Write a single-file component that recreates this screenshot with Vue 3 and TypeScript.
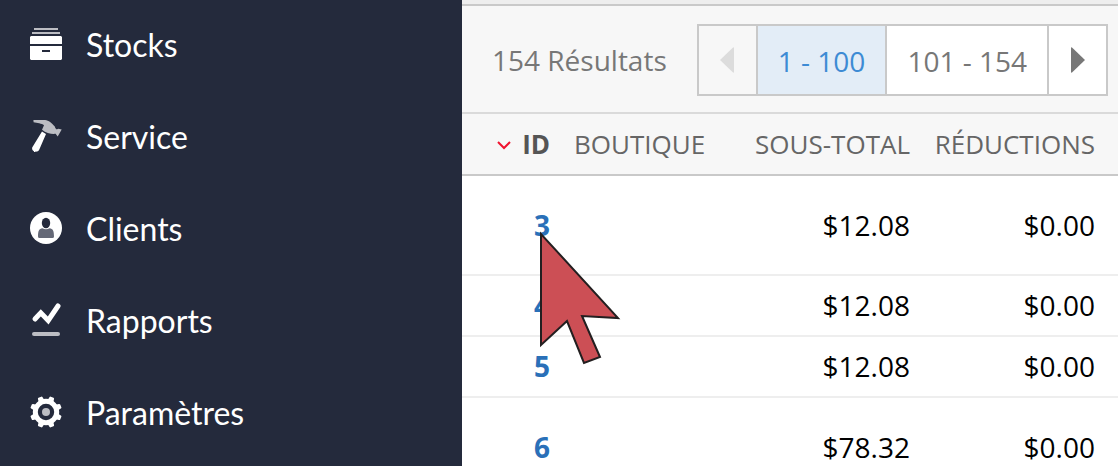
<script setup lang="ts">
interface NavItem { label: string; icon: string }
interface Sale { id: number; subtotal: string; discount: string; tall: boolean }

const nav: NavItem[] = [
  { label: 'Stocks', icon: 'drawer' },
  { label: 'Service', icon: 'hammer' },
  { label: 'Clients', icon: 'person' },
  { label: 'Rapports', icon: 'chart' },
  { label: 'Paramètres', icon: 'gear' },
]

const sales: Sale[] = [
  { id: 3, subtotal: '$12.08', discount: '$0.00', tall: true },
  { id: 4, subtotal: '$12.08', discount: '$0.00', tall: false },
  { id: 5, subtotal: '$12.08', discount: '$0.00', tall: false },
  { id: 6, subtotal: '$78.32', discount: '$0.00', tall: true },
]
</script>

<template>
  <div class="layout">
    <nav class="sidebar">
      <a v-for="item in nav" :key="item.label" class="nav-item" href="#">
        <svg class="nav-icon" viewBox="0 0 32 32" aria-hidden="true">
          <g v-if="item.icon === 'drawer'">
            <path class="dim" d="M4 0h24v2H4zM2 4h28v2H2z" />
            <path d="M1 8h30l1 1v7H0V9zM0 18h32v13l-1 1H1l-1-1zM12 22v2h8v-2z" fill-rule="evenodd" />
          </g>
          <g v-else-if="item.icon === 'hammer'">
            <path class="dim" d="M3.400 0H15C19 .3 21.500 3 24.800 6.400C25.500 9 26.500 9.800 28.500 8.800L31.700 9.500L27.700 16.400L25.600 13.800C22 14.200 16 13.400 12 9.800L14 5.200C11.800 3.300 7 3.300 3.600 2.300Z" />
            <path d="M12 11.500L16 14L9.300 29.500C8 33 1.200 32.200 2.200 27.500Z" />
          </g>
          <g v-else-if="item.icon === 'person'">
            <circle cx="16" cy="16" r="16" />
            <ellipse class="ink" cx="16" cy="11" rx="4.200" ry="5.200" />
            <path class="shade" d="M12.500 16.200C14.500 17.600 17.500 17.600 19.500 16.200C23 16.500 24 19 24 24.500Q24 26 22.500 26H9.500Q8 26 8 24.500C8 19 9 16.500 12.500 16.200Z" />
          </g>
          <g v-else-if="item.icon === 'chart'">
            <path class="trend" d="M5 15L10.800 8.800L18.200 16.500L28 2" />
            <path class="base" d="M4 30H28" />
          </g>
          <g v-else>
            <g class="ring">
              <circle cx="16" cy="16" r="10.700" />
            </g>
            <g transform="rotate(22.500 16 16)">
              <path v-for="n in 8" :key="n" :transform="`rotate(${n * 45} 16 16)`" d="M12.800 5.500L13.500 1Q13.700 0 14.500 0H17.500Q18.300 0 18.500 1L19.200 5.500Z" />
            </g>
            <circle class="dim" cx="16" cy="16" r="4" />
          </g>
        </svg>
        <span>{{ item.label }}</span>
      </a>
    </nav>

    <main class="content">
      <div class="toolbar">
        <span class="count">154 Résultats</span>
        <div class="pager">
          <button class="page arrow disabled" type="button" aria-label="Page précédente" disabled>
            <svg viewBox="0 0 16 28" aria-hidden="true"><path d="M1 14L14 1.500Q15 1 15 2V26Q15 27 14 26.500Z" /></svg>
          </button>
          <button class="page current" type="button" aria-current="page">1 - 100</button>
          <button class="page" type="button">101 - 154</button>
          <button class="page arrow" type="button" aria-label="Page suivante">
            <svg viewBox="0 0 16 28" aria-hidden="true"><path d="M15 14L2 1.500Q1 1 1 2V26Q1 27 2 26.500Z" /></svg>
          </button>
        </div>
      </div>

      <table class="sales">
        <colgroup>
          <col class="col-id"><col><col class="col-subtotal"><col class="col-discount">
        </colgroup>
        <thead>
          <tr>
            <th class="id" scope="col">
              <svg class="sort" viewBox="0 0 16 10" aria-hidden="true"><path d="M2 2L8 8L14 2" /></svg>ID
            </th>
            <th class="shop" scope="col">BOUTIQUE</th>
            <th scope="col">SOUS-TOTAL</th>
            <th scope="col">RÉDUCTIONS</th>
          </tr>
        </thead>
        <tbody>
          <tr v-for="sale in sales" :key="sale.id" :class="{ tall: sale.tall }">
            <td class="id"><a href="#">{{ sale.id }}</a></td>
            <td></td>
            <td>{{ sale.subtotal }}</td>
            <td>{{ sale.discount }}</td>
          </tr>
        </tbody>
      </table>
    </main>

    <svg class="pointer" viewBox="0 0 84 136" aria-hidden="true">
      <path d="M3 3V114L29 90L46 132L62 126L44 85L80 87Z" />
    </svg>
  </div>
</template>

<style>
body { overflow: hidden; }
</style>

<style scoped>
.layout {
  position: relative;
  display: flex;
  height: 100vh;
  overflow: hidden;
  background: #fff;
  font-family: "Open Sans", "Noto Sans", sans-serif;
  font-size: 28px;
}
.sidebar {
  flex: 0 0 462px;
  background: #242a3c;
  font-family: Lato, sans-serif;
  font-size: 32px;
}
.nav-item {
  display: flex;
  align-items: center;
  gap: 24px;
  height: 92px;
  padding: 0 0 4px 30px;
  box-sizing: border-box;
  color: #fff;
  text-decoration: none;
}
.nav-icon { width: 32px; height: 32px; fill: #fff; overflow: visible; }
.dim { fill: #bcbdc3; }
.ink { fill: #242a3c; }
.shade { fill: #656977; }
.trend { fill: none; stroke: #fff; stroke-width: 5; stroke-linecap: round; stroke-linejoin: miter; }
.base { stroke: #bcbdc3; stroke-width: 4; stroke-linecap: round; }
.ring { fill: none; stroke: #fff; stroke-width: 5; }
.content { flex: 1; min-width: 0; border-top: 4px solid #eee; }
.toolbar {
  display: flex;
  align-items: center;
  justify-content: space-between;
  padding: 18px 10px 16px 30px;
  background: #f7f7f7;
  border-top: 2px solid #c9c9c9;
  border-bottom: 2px solid #dadada;
  color: #777;
}
.pager { display: flex; border: 2px solid #c9c9c9; }
.page {
  height: 68px;
  padding: 2px 20px 0;
  border: 0;
  border-right: 2px solid #c9c9c9;
  background: #fff;
  color: #777;
  font: inherit;
}
.page:last-child { border-right: 0; }
.current { background: #e3edf7; color: #3d8bd4; }
.arrow {
  display: flex;
  align-items: center;
  justify-content: center;
  box-sizing: content-box;
  width: 57px;
  padding: 0;
  fill: #777;
}
.arrow svg { width: 16px; height: 28px; }
.disabled { background: #f7f7f7; fill: #dcdcdc; }
.sales { width: 100%; table-layout: fixed; border-collapse: separate; border-spacing: 0; }
.col-id { width: 100px; }
.col-subtotal { width: 179px; }
.col-discount { width: 196px; }
th {
  height: 60px;
  padding: 0 12px 0 0;
  background: #f7f7f7;
  border-bottom: 2px solid #c9c9c9;
  color: #666;
  font-size: 26px;
  font-weight: 400;
  text-align: right;
  white-space: nowrap;
}
td {
  height: 57px;
  padding: 0 12px 2px 0;
  border-bottom: 2px solid #eee;
  color: #000;
  text-align: right;
}
.tall td { height: 98px; padding-bottom: 0; }
th:last-child, td:last-child { padding-right: 23px; }
th.shop { padding-left: 12px; text-align: left; }
th.id { color: #555; font-weight: 700; }
.id a { color: #2a70b8; font-weight: 700; text-decoration: none; }
.sort { width: 16px; height: 10px; margin-right: 10px; vertical-align: 4px; fill: none; stroke: #f0142f; stroke-width: 2; }
.pointer {
  position: absolute;
  left: 538px;
  top: 231px;
  width: 84px;
  height: 136px;
  fill: #cc4f55;
  stroke: #231f20;
  stroke-width: 2;
  pointer-events: none;
}
</style>
